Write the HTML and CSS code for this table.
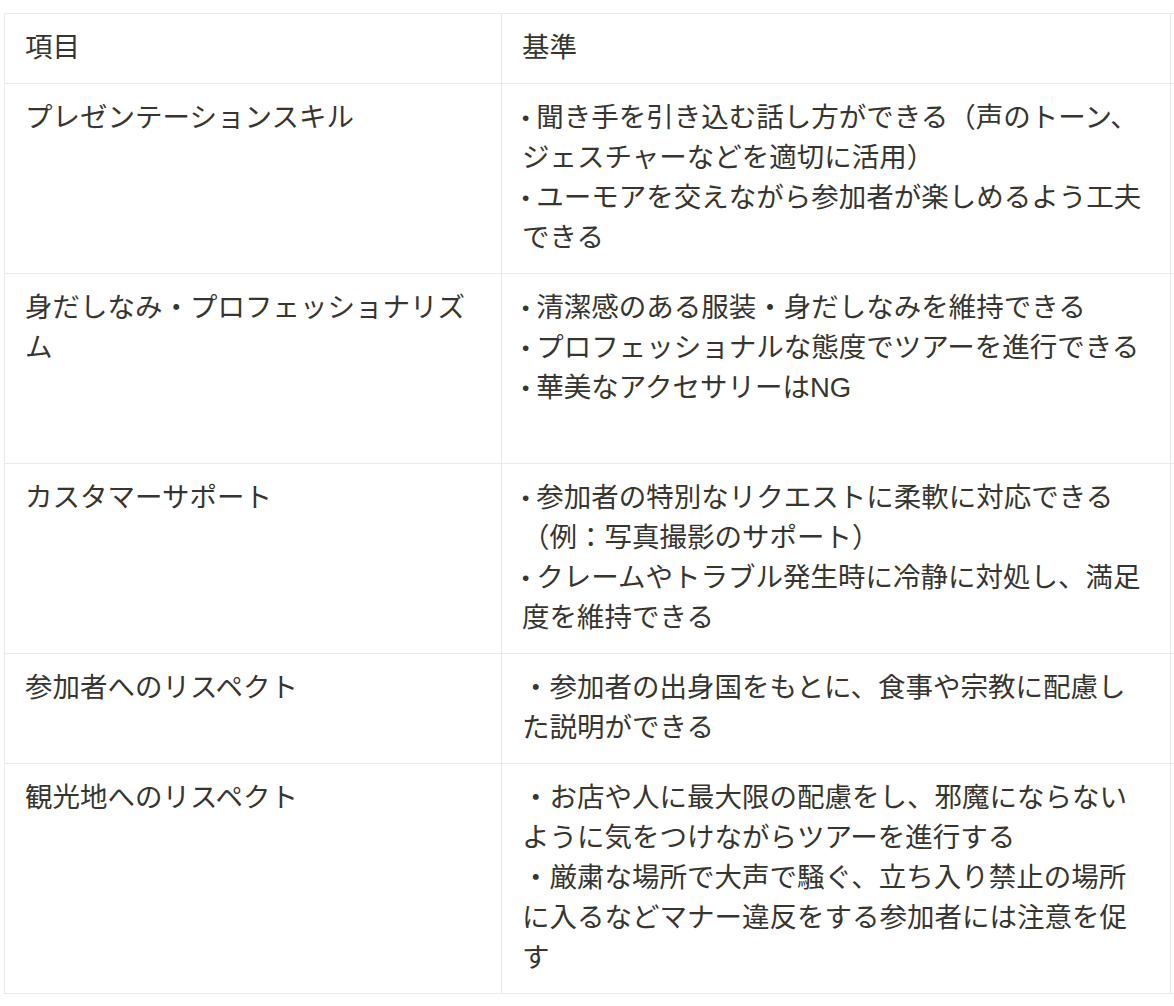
FILE: index.html
```html
<!DOCTYPE html>
<html lang="ja">
<head>
<meta charset="utf-8">
<title>評価基準</title>
<link rel="stylesheet" href="styles.css">
</head>
<body>
<div class="wrap">
<table class="grid">
  <colgroup>
    <col class="c1">
    <col class="c2">
    <col class="c3">
  </colgroup>
  <tr>
    <td>項目</td>
    <td>基準</td>
    <td class="ext"></td>
  </tr>
  <tr>
    <td>プレゼンテーションスキル</td>
    <td><span class="b">•</span>聞き手を引き込む話し方ができる（声のトーン、ジェスチャーなどを適切に活用）<br><span class="b">•</span>ユーモアを交えながら参加者が楽しめるよう工夫できる</td>
    <td class="ext"></td>
  </tr>
  <tr>
    <td>身だしなみ・プロフェッショナリズム</td>
    <td><span class="b">•</span>清潔感のある服装・身だしなみを維持できる<br><span class="b">•</span>プロフェッショナルな態度でツアーを進行できる<br><span class="b">•</span>華美なアクセサリーはNG<br><br></td>
    <td class="ext"></td>
  </tr>
  <tr>
    <td>カスタマーサポート</td>
    <td><span class="b">•</span>参加者の特別なリクエストに柔軟に対応できる（例：写真撮影のサポート）<br><span class="b">•</span>クレームやトラブル発生時に冷静に対処し、満足度を維持できる</td>
    <td class="ext"></td>
  </tr>
  <tr>
    <td>参加者へのリスペクト</td>
    <td>・参加者の出身国をもとに、食事や宗教に配慮した説明ができる</td>
    <td class="ext"></td>
  </tr>
  <tr>
    <td>観光地へのリスペクト</td>
    <td>・お店や人に最大限の配慮をし、邪魔にならないように気をつけながらツアーを進行する<br>・厳粛な場所で大声で騒ぐ、立ち入り禁止の場所に入るなどマナー違反をする参加者には注意を促す</td>
    <td class="ext"></td>
  </tr>
</table>
</div>
</body>
</html>
```

FILE: styles.css
```css
html, body {
  margin: 0;
  padding: 0;
  background: #ffffff;
}

.wrap {
  padding: 13px 0 0 4px;
  width: 1170px;
  overflow: hidden;
}

.grid {
  border-collapse: collapse;
  table-layout: fixed;
  width: 1186px;
  font-family: "Liberation Sans", "Noto Sans CJK JP", sans-serif;
  font-size: 27.5px;
  line-height: 40px;
  color: #37352f;
}

.c1 { width: 497px; }
.c2 { width: 669px; }
.c3 { width: 20px; }

.grid td {
  border: 1px solid #e9e9e7;
  padding: 14px 20px 15px 20px;
  vertical-align: top;
  line-break: strict;
}

.grid td.ext {
  padding: 0;
  border-right: none;
}

.b {
  font-size: 21px;
  line-height: 0;
  vertical-align: 2px;
  padding-right: 7px;
}
```
